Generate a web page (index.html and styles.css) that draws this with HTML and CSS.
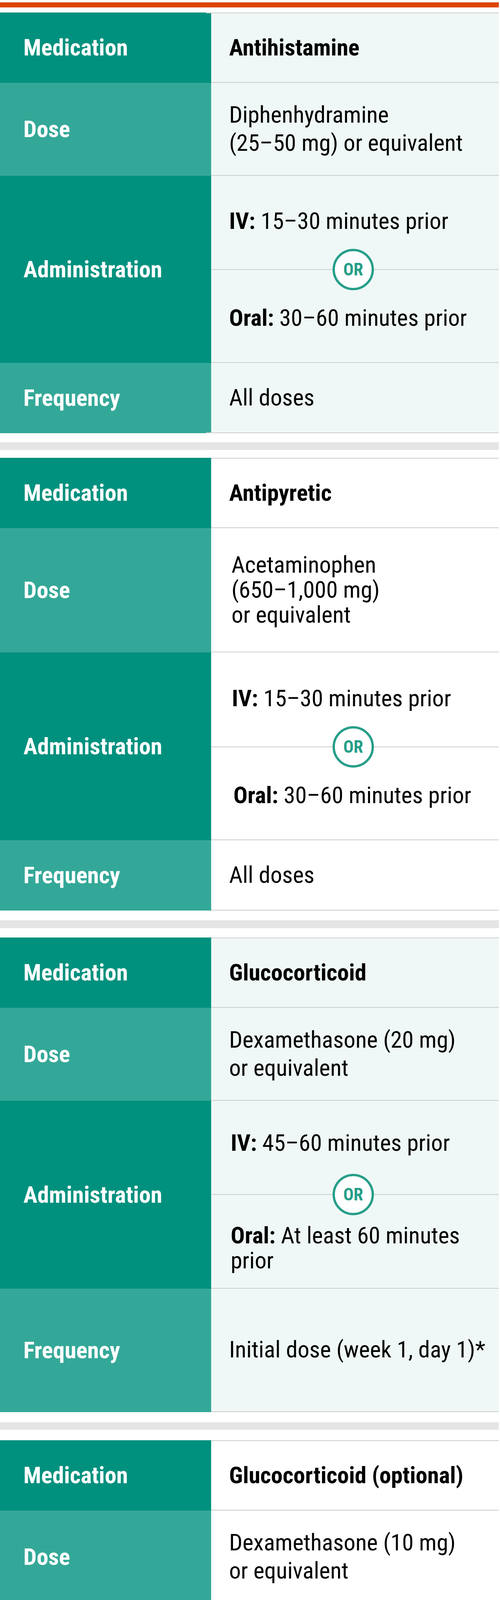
FILE: index.html
```html
<!DOCTYPE html>
<html lang="en">
<head>
<meta charset="utf-8">
<title>Premedication</title>
<link rel="stylesheet" href="styles.css">
</head>
<body>
<div class="page">
  <div class="rule rule--top"></div>

  <section class="med-table med-table--tint med-table--lead">
    <div class="row row--dark">
      <div class="label">Medication</div>
      <div class="value"><strong>Antihistamine</strong></div>
    </div>
    <div class="row row--light">
      <div class="label">Dose</div>
      <div class="value">Diphenhydramine<br>(25–50 mg) or equivalent</div>
    </div>
    <div class="row row--dark">
      <div class="label">Administration</div>
      <div class="value admin">
        <div class="opt opt--iv"><strong>IV:</strong> 15–30 minutes prior</div>
        <div class="divider"><span class="or">OR</span></div>
        <div class="opt opt--oral"><strong>Oral:</strong> 30–60 minutes prior</div>
      </div>
    </div>
    <div class="row row--light">
      <div class="label">Frequency</div>
      <div class="value">All doses</div>
    </div>
  </section>

  <div class="sep sep--first"></div>

  <section class="med-table">
    <div class="row row--dark">
      <div class="label">Medication</div>
      <div class="value"><strong>Antipyretic</strong></div>
    </div>
    <div class="row row--light">
      <div class="label">Dose</div>
      <div class="value value--tight">Acetaminophen<br>(650–1,000 mg)<br>or equivalent</div>
    </div>
    <div class="row row--dark">
      <div class="label">Administration</div>
      <div class="value admin admin--roomy admin--inset">
        <div class="opt opt--iv"><strong>IV:</strong> 15–30 minutes prior</div>
        <div class="divider"><span class="or">OR</span></div>
        <div class="opt opt--oral"><strong>Oral:</strong> 30–60 minutes prior</div>
      </div>
    </div>
    <div class="row row--light">
      <div class="label">Frequency</div>
      <div class="value">All doses</div>
    </div>
  </section>

  <div class="sep sep--second"></div>

  <section class="med-table med-table--tint">
    <div class="row row--dark">
      <div class="label">Medication</div>
      <div class="value"><strong>Glucocorticoid</strong></div>
    </div>
    <div class="row row--light">
      <div class="label">Dose</div>
      <div class="value">Dexamethasone (20 mg)<br>or equivalent</div>
    </div>
    <div class="row row--dark">
      <div class="label">Administration</div>
      <div class="value admin admin--wrap">
        <div class="opt opt--iv"><strong>IV:</strong> 45–60 minutes prior</div>
        <div class="divider"><span class="or">OR</span></div>
        <div class="opt opt--oral"><strong>Oral:</strong> At least 60 minutes<br>prior</div>
      </div>
    </div>
    <div class="row row--light">
      <div class="label">Frequency</div>
      <div class="value value--tall">Initial dose (week 1, day 1)*</div>
    </div>
  </section>

  <div class="sep sep--third"></div>

  <section class="med-table">
    <div class="row row--dark">
      <div class="label">Medication</div>
      <div class="value"><strong>Glucocorticoid (optional)</strong></div>
    </div>
    <div class="row row--light">
      <div class="label">Dose</div>
      <div class="value">Dexamethasone (10 mg)<br>or equivalent</div>
    </div>
    <div class="row row--dark">
      <div class="label">Administration</div>
      <div class="value admin admin--inset">
        <div class="opt opt--iv"><strong>IV:</strong> 45–60 minutes prior</div>
        <div class="divider"><span class="or">OR</span></div>
        <div class="opt opt--oral"><strong>Oral:</strong> 60–90 minutes prior</div>
      </div>
    </div>
    <div class="row row--light">
      <div class="label">Frequency</div>
      <div class="value">Optional for<br>subsequent doses</div>
    </div>
  </section>

  <div class="rule rule--bottom"></div>
</div>
</body>
</html>
```

FILE: styles.css
```css
* {
  box-sizing: border-box;
}

body {
  margin: 0;
  background: #ffffff;
  font-family: "Roboto Condensed", Roboto, "Liberation Sans", sans-serif;
  color: #000000;
}

.page {
  width: 1278px;
}

.rule {
  background: #dd4406;
}

.rule--top {
  height: 13px;
  margin-top: 6px;
  margin-bottom: 13px;
}

.rule--bottom {
  height: 12px;
  margin-top: 16px;
}

.sep {
  height: 20px;
  background: #e5e5e5;
}

.sep--first {
  margin: 23px 0 20px;
}

.sep--second {
  margin: 25px 0 24px;
}

.sep--third {
  height: 19px;
  margin: 26px 0 27px;
}

.row {
  display: grid;
  grid-template-columns: 541px 1fr;
}

.label {
  display: flex;
  align-items: center;
  padding: 54px 20px 54px 60px;
  color: #ffffff;
  font-weight: 700;
  font-size: 60px;
  line-height: 72px;
}

.row--dark .label {
  background: #00917e;
}

.row--light .label {
  background: #34a898;
}

.value {
  position: relative;
  display: flex;
  flex-direction: column;
  justify-content: center;
  padding: 46px 10px 46px 46px;
  border-bottom: 2px solid #cdcdcd;
  font-size: 60px;
  line-height: 72px;
  white-space: nowrap;
  background: #ffffff;
}

.med-table--tint .value {
  background: #eff8f6;
}

.row:first-child .value {
  border-top: 2px solid #cdcdcd;
}

/* the first table's outer rules run a little into the label column */
.med-table--lead .row:first-child .value::before,
.med-table--lead .row:last-child .value::after {
  content: "";
  position: absolute;
  left: -13px;
  width: 13px;
  height: 2px;
  background: #cdcdcd;
}

.med-table--lead .row:first-child .value::before {
  top: -2px;
}

.med-table--lead .row:last-child .value::after {
  bottom: -2px;
}

.value strong {
  font-weight: 700;
}

.value--tight {
  line-height: 64px;
  padding-top: 62px;
  padding-bottom: 62px;
  padding-left: 52px;
}

.value--tall {
  padding-top: 120px;
  padding-bottom: 122px;
}

.admin {
  padding: 0;
  justify-content: flex-start;
}

.opt {
  padding-left: 46px;
  padding-right: 10px;
}

.opt--iv {
  padding-top: 80px;
  padding-bottom: 35px;
}

.opt--oral {
  padding-top: 35px;
  padding-bottom: 77px;
}

.admin--roomy .opt--iv {
  padding-top: 82px;
}

.admin--inset .opt--iv {
  padding-left: 53px;
}

.admin--inset .opt--oral {
  padding-left: 57px;
}

.admin--wrap .opt {
  padding-left: 50px;
}

.admin--wrap .opt--iv {
  padding-top: 72px;
  padding-bottom: 43px;
}

.admin--wrap .opt--oral {
  padding-top: 20px;
  padding-bottom: 38px;
  line-height: 64px;
}

.divider {
  display: flex;
  align-items: center;
  justify-content: center;
  height: 106px;
  padding-right: 9px;
  background: linear-gradient(#cdcdcd, #cdcdcd) center / 100% 2px no-repeat;
}

.or {
  display: flex;
  align-items: center;
  justify-content: center;
  width: 106px;
  height: 106px;
  border: 6px solid #269e89;
  border-radius: 50%;
  background: #ffffff;
  color: #269e89;
  font-weight: 700;
  font-size: 44px;
  line-height: 1;
}
```
